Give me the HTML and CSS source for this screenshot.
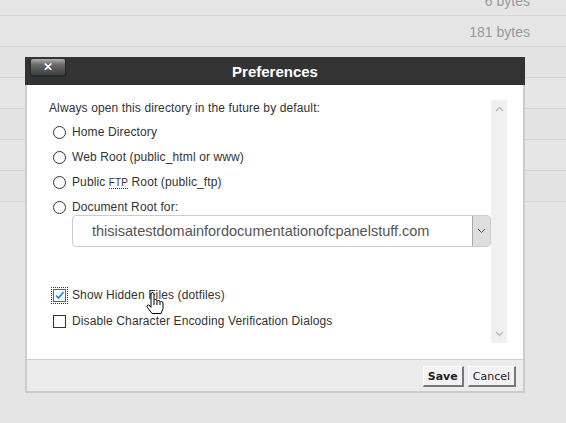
FILE: index.html
```html
<!DOCTYPE html>
<html>
<head>
<meta charset="utf-8">
<link rel="stylesheet" href="styles.css">
</head>
<body>
<div class="list">
  <div class="row first"><span class="size">6 bytes</span></div>
  <div class="row"><span class="size">181 bytes</span></div>
  <div class="row alt"></div>
  <div class="row"></div>
  <div class="row alt"></div>
  <div class="row"></div>
  <div class="row alt"></div>
</div>

<div class="dialog">
  <div class="dlg-head">
    <span class="close">&#x2715;</span>
    <span class="title">Preferences</span>
  </div>
  <div class="dlg-body">
    <div class="pane">
      <div class="intro">Always open this directory in the future by default:</div>
      <div class="opts">
        <div class="opt"><span class="radio"></span><span>Home Directory</span></div>
        <div class="opt"><span class="radio"></span><span>Web Root (public_html or www)</span></div>
        <div class="opt"><span class="radio"></span><span>Public <abbr class="ftp">FTP</abbr> Root (public_ftp)</span></div>
        <div class="opt"><span class="radio"></span><span>Document Root for:</span></div>
      </div>
      <div class="select">
        <span class="sel-text">thisisatestdomainfordocumentationofcpanelstuff.com</span>
        <span class="sel-btn"><svg width="9" height="6" viewBox="0 0 9 6"><path d="M1 1 L4.5 4.5 L8 1" fill="none" stroke="#555" stroke-width="1"/></svg></span>
      </div>
      <div class="checks">
        <div class="opt"><span class="check on"><svg width="11" height="11" viewBox="0 0 11 11"><path d="M2 5.5 L4.5 8 L9.5 2" fill="none" stroke="#2a7fd4" stroke-width="1.6"/></svg></span><span>Show Hidden Files (dotfiles)</span></div>
        <div class="opt"><span class="check"></span><span>Disable Character Encoding Verification Dialogs</span></div>
      </div>
    </div>
    <div class="scrollbar">
      <svg width="9" height="6" viewBox="0 0 9 6"><path d="M1 5 L4.5 1.5 L8 5" fill="none" stroke="#bbb" stroke-width="1.4"/></svg>
      <svg width="9" height="6" viewBox="0 0 9 6"><path d="M1 1 L4.5 4.5 L8 1" fill="none" stroke="#bbb" stroke-width="1.4"/></svg>
    </div>
  </div>
  <div class="dlg-foot">
    <button class="btn save">Save</button>
    <button class="btn">Cancel</button>
  </div>
</div>

<svg class="cursor" width="19" height="23" viewBox="0 0 19 23">
  <path d="M5 2 Q5 0.5 6.5 0.5 Q8 0.5 8 2 L8 8.5 Q8.2 7.5 9.5 7.5 Q11 7.5 11 9 L11 9.5 Q11.3 8.5 12.5 8.5 Q14 8.5 14 10 L14 10.5 Q14.3 9.5 15.5 9.5 Q17 9.5 17 11 L17 16.5 L15 21.5 L6 21.5 L1.5 15.5 Q0.5 14 1.5 13.2 Q2.8 12.5 4 14 L5 15.3 Z" fill="#fff" stroke="#000" stroke-width="1"/>
  <path d="M8 9 L8 13 M11 10 L11 13 M14 11 L14 13" stroke="#000" stroke-width="1" fill="none"/>
</svg>
</body>
</html>
```
FILE: styles.css
```css
html, body {
  margin: 0;
  padding: 0;
}
body {
  background: #e5e5e5;
  width: 566px;
  height: 423px;
  overflow: hidden;
  position: relative;
  font-family: "Liberation Sans", Arial, sans-serif;
}
.list {
  margin-top: -15px;
}
.row {
  height: 30px;
  border-bottom: 1px solid #d6d6d6;
  display: flex;
  align-items: center;
  justify-content: flex-end;
  padding-right: 36px;
  background: #e6e6e6;
}
.row.alt {
  background: #e3e3e3;
}
.size {
  font-size: 14px;
  color: #999;
  margin-top: 2px;
}

.dialog {
  position: absolute;
  left: 25px;
  top: 57px;
  width: 500px;
}
.dlg-head {
  height: 28px;
  background: #333;
  position: relative;
  display: flex;
  align-items: center;
  justify-content: center;
}
.close {
  position: absolute;
  left: 6px;
  top: 2px;
  width: 34px;
  height: 16px;
  border-radius: 2px;
  background: linear-gradient(#b0b0b0, #6a6a6a 35%, #3e3e3e);
  box-shadow: 0 1px 0 1px #1f2a2a;
  color: #fff;
  font-size: 12px;
  font-weight: bold;
  line-height: 16px;
  text-align: center;
  font-family: "DejaVu Sans", sans-serif;
  text-shadow: 0 0 0.5px #fff;
}
.title {
  color: #fff;
  font-weight: bold;
  font-size: 15px;
  margin-top: 1px;
}
.dlg-body {
  background: #fff;
  border-left: 2px solid #ccc;
  border-right: 2px solid #ccc;
  height: 274px;
  box-sizing: border-box;
  display: flex;
  padding: 15px 16px 16px 22px;
}
.pane {
  flex: 1;
  font-size: 12px;
  color: #333;
  letter-spacing: 0.12px;
}
.intro {
  line-height: 16px;
}
.opts {
  margin-top: 7px;
  display: flex;
  flex-direction: column;
  gap: 7px;
}
.opt {
  height: 18px;
  display: flex;
  align-items: center;
  gap: 6px;
  padding-left: 4px;
}
.radio {
  width: 11px;
  height: 11px;
  border: 1px solid #333;
  border-radius: 50%;
  background: #fff;
  flex: none;
}
.ftp {
  text-decoration: none;
  border-bottom: 1px dotted #333;
  font-size: 10px;
}
.select {
  margin: -1px 0 0 23px;
  height: 32px;
  width: 419px;
  box-sizing: border-box;
  border: 1px solid #ccc;
  border-radius: 4px;
  display: flex;
  align-items: center;
  position: relative;
  letter-spacing: 0;
}
.sel-text {
  flex: 1;
  padding-left: 19px;
  font-size: 14.5px;
  color: #555;
}
.sel-btn {
  width: 17px;
  height: 30px;
  border-left: 1px solid #aaa;
  background: #dedede;
  border-radius: 0 3px 3px 0;
  display: flex;
  align-items: center;
  justify-content: center;
}
.checks {
  margin-top: 39px;
  display: flex;
  flex-direction: column;
  gap: 8px;
}
.check {
  width: 11px;
  height: 11px;
  border: 1px solid #333;
  background: #fff;
  flex: none;
  display: flex;
}
.check.on {
  border-color: #2a6fc0;
  outline: 1px dotted #333;
  outline-offset: 1px;
}
.scrollbar {
  width: 16px;
  background: #f0f0f0;
  display: flex;
  flex-direction: column;
  justify-content: space-between;
  align-items: center;
  padding: 6px 0;
  box-sizing: border-box;
}
.dlg-foot {
  background: #ececec;
  border: 2px solid #ccc;
  border-top: 1px solid #ccc;
  height: 34px;
  box-sizing: border-box;
  display: flex;
  justify-content: flex-end;
  align-items: flex-start;
  padding: 6px 7px 0 0;
  gap: 4px;
}
.btn {
  font-family: "DejaVu Sans", Verdana, sans-serif;
  font-size: 11px;
  color: #222;
  height: 21px;
  padding: 0 4px;
  background: #f2f2f2;
  border-style: solid;
  border-width: 1px 2px 2px 1px;
  border-color: #fff #777 #777 #fff;
  border-radius: 0;
  margin: 0;
}
.btn.save {
  font-weight: bold;
}
.cursor {
  position: absolute;
  left: 146px;
  top: 292px;
}
```
